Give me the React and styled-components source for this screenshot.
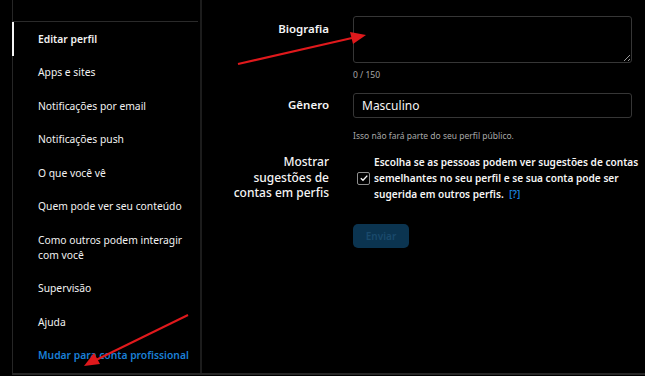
import React from "react";
import styled, { createGlobalStyle } from "styled-components";

const Global = createGlobalStyle`
  html, body { margin: 0; padding: 0; background: #000; }
  body { font-family: "Noto Sans", "Open Sans", sans-serif; color: #f5f5f5; }
  * { box-sizing: border-box; }
`;

const Page = styled.div`
  position: relative;
  width: 645px;
  height: 376px;
  overflow: hidden;
  background: #000;
`;

const Frame = styled.div`
  margin-left: 12px;
  height: 375px;
  border-left: 1px solid #262626;
  border-bottom: 2px solid #262626;
  display: grid;
  grid-template-columns: 189px 1fr;
`;

const Side = styled.aside`
  border-right: 2px solid #1c1c1c;
  padding-top: 21px;
  padding-right: 2px;
`;

const Nav = styled.ul`
  list-style: none;
  margin: 0;
  padding: 0;
  border-top: 1px solid #2a2a2a;
`;

const Item = styled.li`
  position: relative;
  padding: 9px 0 9px 24px;
  min-height: 33.6px;
  font-size: 10.3px;
  line-height: 15px;
  font-weight: ${(p) => (p.$active || p.$blue ? 600 : 400)};
  color: ${(p) => (p.$blue ? "#1a7fd6" : "#f2f2f2")};
  border-left: 2px solid ${(p) => (p.$active ? "#f5f5f5" : "transparent")};
  margin-left: -1px;
  &:first-child { padding-top: 10px; }
`;

const Main = styled.main`
  padding: 16px 0 0 27px;
  display: flex;
  flex-direction: column;
`;

const Row = styled.div`
  display: grid;
  grid-template-columns: 100px 1fr;
  column-gap: 24px;
  margin-top: ${(p) => p.$mt || 0}px;
`;

const Label = styled.label`
  text-align: right;
  font-size: ${(p) => p.$fs || 11.5}px;
  font-weight: ${(p) => p.$fw || 600};
  line-height: 15.5px;
  padding-top: ${(p) => p.$pt || 0}px;
  color: #f5f5f5;
`;

const Field = styled.div`
  display: flex;
  flex-direction: column;
`;

const TextArea = styled.textarea`
  width: 279px;
  height: 47px;
  background: #000;
  border: 1px solid #363636;
  border-radius: 3px;
  color: #f5f5f5;
  font-family: inherit;
  outline: none;
`;

const Input = styled.input`
  width: 279px;
  height: 25px;
  background: #000;
  border: 1px solid #363636;
  border-radius: 3px;
  color: #f5f5f5;
  font-family: inherit;
  font-size: 12px;
  padding: 0 8px;
  outline: none;
`;

const Hint = styled.div`
  font-size: 8.5px;
  color: #a8a8a8;
  margin-top: ${(p) => p.$mt || 6}px;
`;

const CheckWrap = styled.div`
  display: flex;
  align-items: center;
  gap: 4px;
  margin-left: 4px;
`;

const Box = styled.span`
  flex: none;
  width: 13px;
  height: 13px;
  border: 1px solid #8e8e8e;
  border-radius: 2px;
  display: flex;
  align-items: center;
  justify-content: center;
`;

const CheckText = styled.p`
  margin: 0;
  width: 272px;
  font-size: 10.1px;
  line-height: 16px;
  font-weight: 600;
  color: #f5f5f5;
`;

const Help = styled.span`
  color: #1a7fd6;
`;

const Button = styled.button`
  width: 56px;
  height: 24px;
  border: none;
  border-radius: 5px;
  background: #0b3450;
  color: #1a4a6c;
  font-family: inherit;
  font-size: 10px;
  font-weight: 600;
`;

const Overlay = styled.svg`
  position: absolute;
  left: 0;
  top: 0;
  pointer-events: none;
`;

const items = [
  "Editar perfil",
  "Apps e sites",
  "Notificações por email",
  "Notificações push",
  "O que você vê",
  "Quem pode ver seu conteúdo",
  "Como outros podem interagir com você",
  "Supervisão",
  "Ajuda",
];

export default function App() {
  return (
    <Page>
      <Global />
      <Frame>
        <Side>
          <Nav>
            {items.map((t, i) => (
              <Item key={t} $active={i === 0}>{t}</Item>
            ))}
            <Item $blue>Mudar para conta profissional</Item>
          </Nav>
        </Side>
        <Main>
          <Row>
            <Label $pt={5}>Biografia</Label>
            <Field>
              <TextArea />
              <Hint $mt={6}>0 / 150</Hint>
            </Field>
          </Row>
          <Row $mt={13}>
            <Label $pt={4}>Gênero</Label>
            <Field>
              <Input defaultValue="Masculino" />
              <Hint $mt={12}>Isso não fará parte do seu perfil público.</Hint>
            </Field>
          </Row>
          <Row $mt={13}>
            <Label $fs={12} $fw={500}>Mostrar sugestões de contas em perfis</Label>
            <CheckWrap>
              <Box>
                <svg width="10" height="10" viewBox="0 0 10 10">
                  <path d="M1.8 5.2 L4 7.3 L8.3 2.6" fill="none" stroke="#f5f5f5" strokeWidth="1.4" />
                </svg>
              </Box>
              <CheckText>
                Escolha se as pessoas podem ver sugestões de contas semelhantes no seu perfil e se sua conta pode ser sugerida em outros perfis.{"\u00a0 "}
                <Help>[?]</Help>
              </CheckText>
            </CheckWrap>
          </Row>
          <Row $mt={22}>
            <span />
            <Field>
              <Button>Enviar</Button>
            </Field>
          </Row>
        </Main>
      </Frame>
      <Overlay width="645" height="376" viewBox="0 0 645 376">
        <line x1="238" y1="64" x2="352" y2="38" stroke="#e0191c" strokeWidth="2" />
        <polygon points="366,35 350,32 353,44" fill="#e0191c" />
        <line x1="188" y1="315" x2="96" y2="360" stroke="#e0191c" strokeWidth="2" />
        <polygon points="84,366 94,353 100,364" fill="#e0191c" />
      </Overlay>
    </Page>
  );
}
